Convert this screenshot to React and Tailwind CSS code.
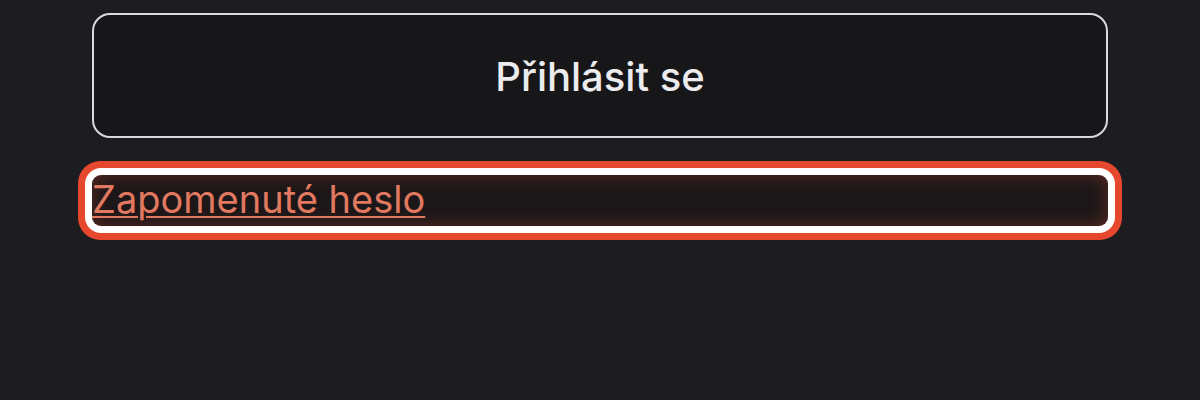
import React from 'react';

const App = () => {
  return (
    <div className="min-h-[400px] w-full bg-[#1d1c21] px-[92px] pt-[13px] font-['Inter','Liberation_Sans',sans-serif]">
      <button
        type="button"
        className="flex h-[125px] w-full items-center justify-center rounded-[18px] border-2 border-[#dadade] bg-[#17171a] pt-[3px] text-[40px] font-medium text-[#ececee]"
      >
        Přihlásit se
      </button>

      <a
        href="#"
        className="mt-[37px] block h-[51px] rounded-[9px] bg-[#1c1719] pb-[3px] text-[38px] leading-[48px] text-[#e0795f] underline decoration-2 underline-offset-[3px] shadow-[inset_0_0_18px_rgba(214,78,48,0.35),0_0_0_7px_#ffffff,0_0_0_14px_#e5482d]"
      >
        Zapomenuté heslo
      </a>
    </div>
  );
};

export default App;
